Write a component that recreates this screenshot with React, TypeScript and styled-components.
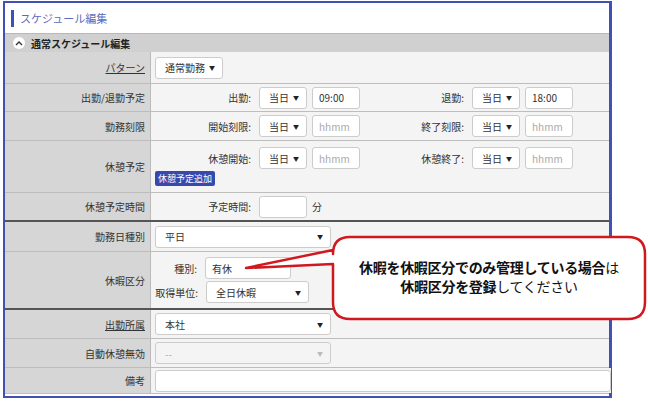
import React from "react";
import styled, { createGlobalStyle } from "styled-components";

const G = createGlobalStyle`
  body { margin:0; background:#fff; font-family:"Noto Sans CJK JP","Noto Sans",sans-serif; font-size:10px; color:#333; }
`;
const Page = styled.div`width:648px;height:401px;position:relative;overflow:hidden;background:#fff;`;
const Frame = styled.div`
  position:absolute;left:3px;top:1px;width:604px;height:393px;border:2px solid #3f51b5;border-right-width:3px;background:#fff;
  display:flex;flex-direction:column;
`;
const Title = styled.div`height:30px;display:flex;align-items:center;padding-left:6px;color:#5c6bc0;font-size:11px;`;
const Bar = styled.span`width:3px;height:17px;background:#3f51b5;margin-right:6px;`;
const SecHead = styled.div`height:18px;background:#d0d0d0;border-top:1px solid #b8b8b8;display:flex;align-items:center;padding-left:8px;font-weight:bold;font-size:10px;color:#222;gap:6px;`;
const Circle = styled.span`width:12px;height:12px;border-radius:50%;background:#fff;display:flex;align-items:center;justify-content:center;`;
const Row = styled.div<{h:number;thick?:boolean}>`
  display:grid;grid-template-columns:146px 1fr;height:${p=>p.h}px;border-bottom:${p=>p.thick?"2px solid #555":"1px solid #bdbdbd"};
`;
const Label = styled.div<{u?:boolean}>`background:#d6d6d6;display:flex;align-items:center;justify-content:flex-end;padding-right:5px;border-right:1px solid #bbb;text-decoration:${p=>p.u?"underline":"none"};color:#333;`;
const Val = styled.div`background:#f4f4f4;display:flex;flex-direction:column;justify-content:center;padding-left:4px;gap:2px;`;
const Line = styled.div`display:flex;align-items:center;`;
const FLabel = styled.div<{w:number}>`width:${p=>p.w}px;text-align:right;padding-right:8px;box-sizing:border-box;`;
const Sel = styled.div<{w:number;dis?:boolean}>`
  width:${p=>p.w}px;height:22px;box-sizing:border-box;border:1px solid #ccc;border-radius:3px;background:${p=>p.dis?"#f4f4f4":"#fff"};
  display:flex;align-items:center;justify-content:space-between;padding:0 7px 0 9px;color:${p=>p.dis?"#aaa":"#333"};margin-right:5px;
`;
const Arrow = styled.span<{dis?:boolean}>`font-size:6px;color:${p=>p.dis?"#bbb":"#222"};`;
const Inp = styled.div<{w:number;ph?:boolean}>`width:${p=>p.w}px;height:22px;box-sizing:border-box;border:1px solid #ccc;border-radius:3px;background:#fff;display:flex;align-items:center;padding-left:6px;color:${p=>p.ph?"#aaa":"#333"};`;
const Btn = styled.div`background:#3949ab;color:#fff;font-size:9px;padding:1px 3px;border-radius:2px;width:fit-content;`;
const Unit = styled.span`margin-left:5px;`;
const Callout = styled.svg`position:absolute;left:0;top:0;`;
const CText = styled.div`position:absolute;left:336px;top:258px;width:306px;text-align:center;font-size:14px;line-height:19px;color:#111;letter-spacing:-0.3px;`;

const S=({w=48,t="当日",dis=false}:{w?:number;t?:string;dis?:boolean})=><Sel w={w} dis={dis}><span>{t}</span><Arrow dis={dis}>▼</Arrow></Sel>;

export default function App(){
  return <Page><G/>
    <Frame>
      <Title><Bar/>スケジュール編集</Title>
      <SecHead><Circle><svg width="8" height="6" viewBox="0 0 8 6"><path d="M1 5 L4 2 L7 5" stroke="#333" strokeWidth="1.4" fill="none"/></svg></Circle>通常スケジュール編集</SecHead>
      <Row h={31}><Label u>パターン</Label><Val><Line><S w={68} t="通常勤務"/></Line></Val></Row>
      <Row h={27}><Label>出勤/退勤予定</Label><Val><Line><FLabel w={104}>出勤:</FLabel><S/><Inp w={48}>09:00</Inp><FLabel w={112}>退勤:</FLabel><S/><Inp w={48}>18:00</Inp></Line></Val></Row>
      <Row h={28}><Label>勤務刻限</Label><Val><Line><FLabel w={104}>開始刻限:</FLabel><S/><Inp w={48} ph>hhmm</Inp><FLabel w={112}>終了刻限:</FLabel><S/><Inp w={48} ph>hhmm</Inp></Line></Val></Row>
      <Row h={51}><Label>休憩予定</Label><Val><Line><FLabel w={104}>休憩開始:</FLabel><S/><Inp w={48} ph>hhmm</Inp><FLabel w={112}>休憩終了:</FLabel><S/><Inp w={48} ph>hhmm</Inp></Line><Btn>休憩予定追加</Btn></Val></Row>
      <Row h={27} thick><Label>休憩予定時間</Label><Val><Line><FLabel w={104}>予定時間:</FLabel><Inp w={48}/><Unit>分</Unit></Line></Val></Row>
      <Row h={29}><Label>勤務日種別</Label><Val><Line><S w={176} t="平日"/></Line></Val></Row>
      <Row h={56} thick><Label>休暇区分</Label><Val><Line><FLabel w={50}>種別:</FLabel><Inp w={86}>有休</Inp></Line><Line><FLabel w={51}>取得単位:</FLabel><S w={103} t="全日休暇"/></Line></Val></Row>
      <Row h={28}><Label u>出勤所属</Label><Val><Line><S w={176} t="本社"/></Line></Val></Row>
      <Row h={28}><Label>自動休憩無効</Label><Val><Line><S w={176} t="--" dis/></Line></Val></Row>
      <Row h={25}><Label>備考</Label><Val><Line><Inp w={456}/></Line></Val></Row>
    </Frame>
    <Callout width="648" height="401">
      <path d="M350 237 H628 Q645 237 645 254 V302 Q645 319 628 319 H350 Q333 319 333 302 V264 L246 268 L333 250 V254 Q333 237 350 237 Z" fill="#fff" stroke="#d0191f" strokeWidth="2.5" strokeLinejoin="round"/>
    </Callout>
    <CText><b>休暇を休暇区分でのみ管理している場合</b>は<br/><b>休暇区分を登録</b>してください</CText>
  </Page>;
}
